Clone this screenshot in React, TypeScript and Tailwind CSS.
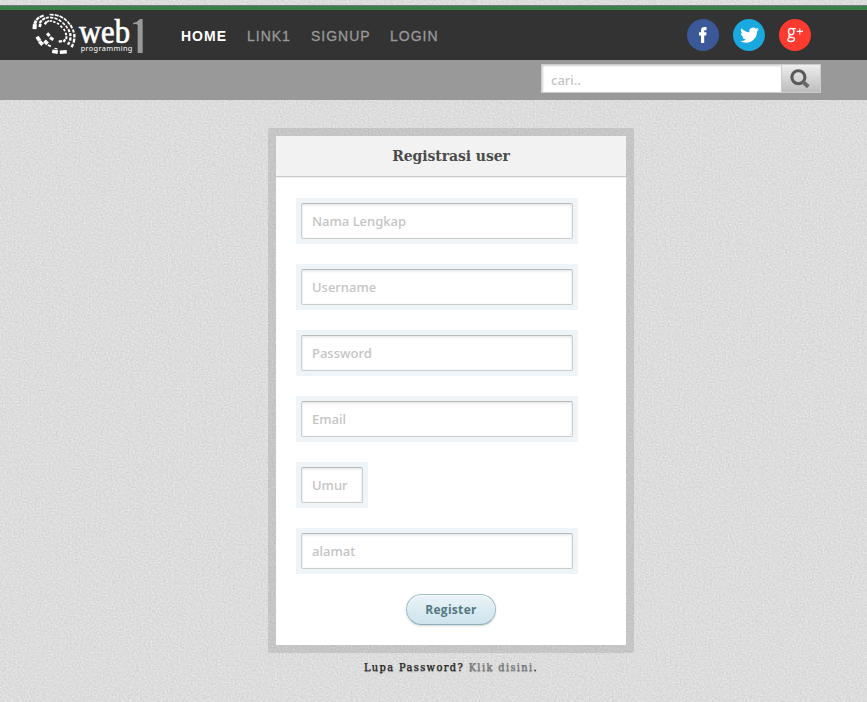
import React from "react";

type Dash = [number, number, number, number, number];

// x, y, angle, length, thickness
const dashes: Dash[] = [
  [104, 80, -85, 15, 12], [106, 67, -65, 11, 9], [113, 56, -45, 11, 7], [125, 49, -22, 13, 6],
  [120, 76, -80, 10, 8], [122, 65, -55, 10, 7], [131, 57, -30, 10, 6], [142, 53, -10, 9, 5],
  [137, 69, -50, 9, 7], [144, 64, -20, 8, 5], [153, 63, 0, 7, 5], [163, 66, 20, 7, 5],
  [155, 44, 6, 12, 5], [170, 46, 15, 12, 5], [184, 51, 30, 12, 5], [196, 59, 42, 11, 5],
  [206, 69, 52, 11, 5], [214, 80, 62, 11, 6], [220, 93, 75, 10, 6], [223, 107, 88, 11, 7],
  [222, 122, 98, 12, 7], [217, 137, 114, 11, 7],
  [155, 53, 8, 10, 5], [168, 56, 22, 10, 5], [180, 62, 35, 10, 5], [191, 71, 46, 10, 5],
  [200, 81, 56, 10, 5], [207, 92, 70, 9, 6], [211, 104, 84, 9, 7], [211, 117, 96, 10, 7],
  [206, 130, 114, 9, 7], [174, 71, 30, 7, 5], [184, 80, 48, 8, 5], [193, 90, 60, 8, 5],
  [198, 102, 76, 8, 6], [199, 113, 92, 9, 6], [193, 122, 120, 9, 7], [181, 124, 170, 10, 7],
  [115, 116, 54, 14, 11], [123, 129, 48, 14, 11], [145, 104, 50, 11, 9], [155, 116, 35, 12, 9],
  [138, 127, 44, 13, 11], [148, 137, 25, 10, 5], [165, 155, 8, 17, 11], [168, 146, 8, 9, 4],
  [190, 156, -4, 21, 10],
];

const Logo = () => (
  <svg className="ml-[32px] h-[44px] w-[114px] shrink-0" viewBox="96 36 342 132" fill="#fff" role="img" aria-label="web1 programming">
    {dashes.map(([x, y, a, l, w], i) => (
      <rect key={i} x={x - l / 2} y={y - w / 2} width={l} height={w} transform={`rotate(${a} ${x} ${y})`} />
    ))}
    <text x="237" y="128" fontFamily="Liberation Serif, serif" fontSize="104" textLength="153" lengthAdjust="spacingAndGlyphs" stroke="#fff" strokeWidth="2.2">web</text>
    <text x="242" y="154" fontFamily="Noto Sans, sans-serif" fontSize="22" textLength="155" lengthAdjust="spacing">programming</text>
    <path d="M428 57V159H413V75Q410 71 399 73V69Q413 66 420 57Z" fill="#999" />
  </svg>
);

const Paper = () => (
  <svg className="absolute inset-0 -z-10 h-full w-full" aria-hidden="true">
    <filter id="grain" x="0" y="0" width="100%" height="100%" colorInterpolationFilters="sRGB">
      <feTurbulence type="fractalNoise" baseFrequency="0.57 0.61" numOctaves="2" seed="23" />
      <feGaussianBlur stdDeviation="0.45" />
      <feColorMatrix values="0.1 0.07 0.05 0 0.755  0.1 0.07 0.05 0 0.755  0.1 0.07 0.05 0 0.755  0 0 0 0 1" />
    </filter>
    <rect width="100%" height="100%" filter="url(#grain)" />
  </svg>
);

const Field = ({ label, small = false }: { label: string; small?: boolean }) => (
  <div className={`${small ? "w-[72px]" : "w-[282px]"} h-[46px] bg-[#eef4f7] p-[5px]`}>
    <input
      placeholder={label}
      className="block h-9 w-full rounded-[2px] border border-[#cbcdcc] border-t-[#b9bbba] bg-white px-[10px] font-['Noto_Sans',sans-serif] text-[13px] font-medium shadow-[inset_0_1px_3px_rgba(0,0,0,0.12)] outline-none placeholder:text-[#c4c4c4]"
    />
  </div>
);

export default function App() {
  return (
    <div className="relative isolate h-[702px] w-full overflow-hidden bg-[#dedede] pt-[5px]">
      <Paper />
      <header className="flex h-[55px] items-center border-t border-[#77787c] bg-[#333]">
        <div className="flex h-full w-full flex-col">
          <div className="h-1 w-full shrink-0 bg-[#3a8049]" />
          <div className="flex h-[50px] items-start">
            <div className="pt-[2px]"><Logo /></div>
            <nav className="ml-[35px] flex h-[50px] items-center gap-[20px] pt-[3px] font-['Liberation_Sans',sans-serif] text-[14px] tracking-[1px] text-[#999]">
              <a className="w-[46px] font-bold text-white">HOME</a>
              <a className="w-[44px] [-webkit-text-stroke:0.3px_#999]">LINK1</a>
              <a className="w-[59px] [-webkit-text-stroke:0.3px_#999]">SIGNUP</a>
              <a className="[-webkit-text-stroke:0.3px_#999]">LOGIN</a>
            </nav>
            <div className="mr-14 ml-auto flex gap-[14px] pt-[9px]">
              <svg className="size-8" viewBox="0 0 32 32">
                <circle cx="16" cy="16" r="16" fill="#3b5998" />
                <path d="M14 24V16.5H12V13.3H14V11.2C14 9 15.2 8 17.4 8H19.5V11.2H18.2C17.4 11.2 17.2 11.6 17.2 12.2V13.3H19.5L19.2 16.5H17.2V24Z" fill="#fff" />
              </svg>
              <svg className="size-8" viewBox="0 0 32 32">
                <circle cx="16" cy="16" r="16" fill="#1aa9df" />
                <path transform="translate(7.2 6.8) scale(.78)" d="M23.95 4.57a10 10 0 0 1-2.82.77 4.96 4.96 0 0 0 2.16-2.72c-.95.55-2 .95-3.13 1.18a4.92 4.92 0 0 0-8.38 4.48C7.69 8.1 4.07 6.13 1.64 3.16a4.92 4.92 0 0 0 1.52 6.57 4.9 4.9 0 0 1-2.23-.61v.06a4.92 4.92 0 0 0 3.95 4.83 5 5 0 0 1-2.21.08 4.94 4.94 0 0 0 4.6 3.42A9.87 9.87 0 0 1 0 19.54a13.99 13.99 0 0 0 7.55 2.21c9.05 0 14-7.5 14-13.98 0-.21 0-.42-.02-.63a9.94 9.94 0 0 0 2.46-2.55z" fill="#fff" />
              </svg>
              <svg className="size-8" viewBox="0 0 32 32" fill="none" stroke="#fff">
                <circle cx="16" cy="16" r="16" fill="#ff3b30" stroke="none" />
                <ellipse cx="12.2" cy="12.6" rx="2.7" ry="3.2" strokeWidth="1.4" />
                <path d="M13.2 9.7H16.8M11 15.5C8.8 17 9.5 18 12 18.3C15.5 18.7 15.6 19.2 15.4 20.5C14.8 23 9 23.2 8.8 20.8C8.8 19.6 9.9 18.7 11 18.1" strokeWidth="1.3" />
                <path d="M20.8 9.3V15.6M17.7 12.4H24" strokeWidth="1.1" />
              </svg>
            </div>
          </div>
        </div>
      </header>

      <div className="flex h-10 justify-end bg-[#999] pt-1 pr-[46px]">
        <form className="flex h-[29px] w-[280px] border border-[#ccc]" onSubmit={(e) => e.preventDefault()}>
          <input
            placeholder="cari.."
            className="w-[239px] bg-white pt-[4px] pl-[9px] font-['Noto_Sans',sans-serif] text-[13px] font-medium shadow-[inset_1px_1px_2px_rgba(0,0,0,0.18)] outline-none placeholder:text-[#c4c4c4]"
          />
          <button aria-label="cari" className="flex flex-1 items-center justify-center border-l border-[#ccc] bg-linear-to-b from-[#eee] to-[#bdbdbd]">
            <svg className="mr-[2px] size-5" viewBox="0 0 20 20" fill="none">
              <circle cx="8.4" cy="8.3" r="6.5" stroke="#595959" strokeWidth="3.1" />
              <path d="M13 13L18.3 17.7" stroke="#696969" strokeWidth="4" />
            </svg>
          </button>
        </form>
      </div>

      <main className="mt-7 ml-[268px] w-[366px]">
        <section className="rounded-[2px] bg-black/10 p-2">
          <div className="h-[509px] bg-white">
            <h1 className="h-[41px] border-b border-[#ccc] bg-[#f2f2f2] text-center font-['DejaVu_Serif',serif] text-[14px] leading-[40px] font-bold tracking-[-0.08px] text-[#4b4b4b] shadow-[0_1px_1px_rgba(0,0,0,0.06)]">
              Registrasi user
            </h1>
            <form className="flex flex-col gap-5 pt-[21px] pl-5" onSubmit={(e) => e.preventDefault()}>
              <Field label="Nama Lengkap" />
              <Field label="Username" />
              <Field label="Password" />
              <Field label="Email" />
              <Field label="Umur" small />
              <Field label="alamat" />
              <button className="ml-[110px] h-[31px] w-[90px] rounded-full border border-[#a0bfc5] border-b-[#8badb9] bg-linear-to-b from-[#eaf4f8] to-[#cde3ec] font-['Open_Sans',sans-serif] text-[12px] font-bold tracking-[0.3px] text-[#527881] shadow-[0_1px_2px_rgba(0,0,0,0.18),inset_0_1px_0_#fff]">
                Register
              </button>
            </form>
          </div>
        </section>
        <p className="mt-[5px] text-center font-['DejaVu_Serif_Condensed','DejaVu_Serif',serif] text-[11px] leading-[20px] tracking-[1.35px] whitespace-nowrap text-[#222] [-webkit-text-stroke:0.25px] [text-shadow:0_1px_1px_rgba(0,0,0,0.3)]">
          Lupa Password? <a className="text-[#777]">Klik disini</a>.
        </p>
      </main>
    </div>
  );
}
